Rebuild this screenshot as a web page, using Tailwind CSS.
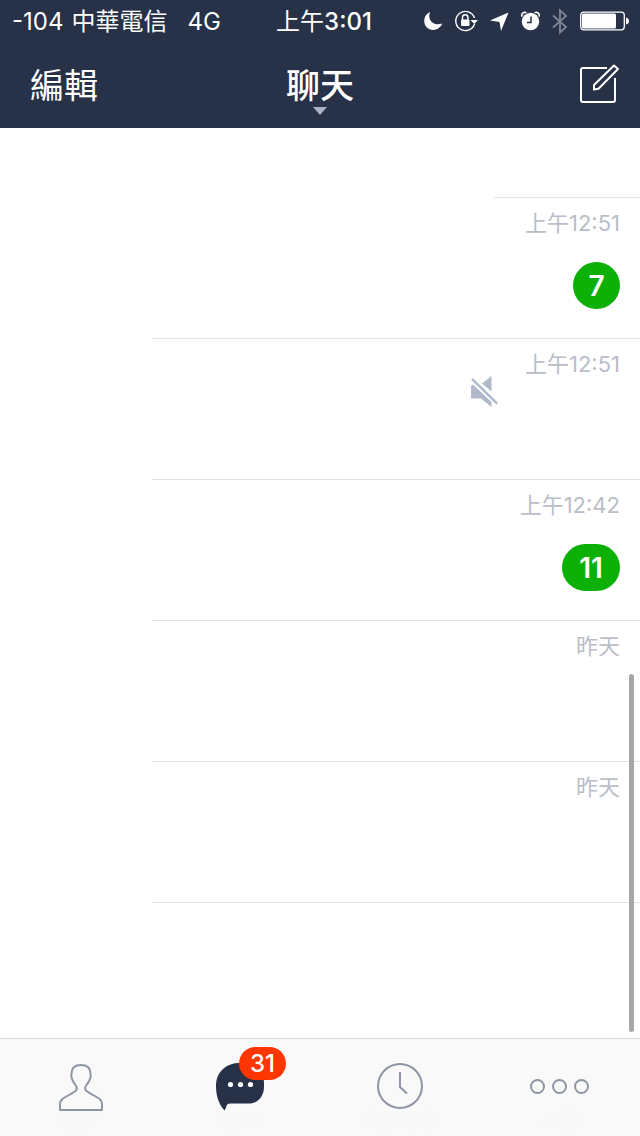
<!DOCTYPE html>
<html lang="zh-Hant">
<head>
<meta charset="utf-8">
<meta name="viewport" content="width=device-width, initial-scale=1">
<title>聊天</title>
<script src="https://cdn.jsdelivr.net/npm/@tailwindcss/browser@4"></script>
</head>
<body class="flex min-h-screen flex-col bg-white font-['Inter','Noto_Sans_CJK_TC',sans-serif] antialiased">
<header class="bg-[#273148] text-white">
  <div class="grid h-10 grid-cols-[1fr_auto_1fr] items-center text-[24px] leading-10">
    <div class="flex pt-0.5 pl-3"><span>-104</span><span class="ml-2">中華電信</span><span class="ml-5">4G</span></div>
    <div class="pt-0.5 pl-2">上午<span class="font-medium">3:01</span></div>
    <div class="flex items-center justify-end gap-3 pr-[11px]">
      <svg class="h-[22px] w-[19px]" viewBox="0 0 19 22" fill="#fff"><path d="M6 2C-1.500 5.500-1.500 16 5 19c5 2.500 11 0 13.300-5.500C10 16.500 3 10.500 6 2Z"/></svg>
      <svg class="h-[22px] w-[23px]" viewBox="0 0 23 22" fill="none" stroke="#fff"><path d="M19.500 8A9.600 9.600 0 1 0 19.500 14" stroke-width="1.400"/><path d="M15.500 10h7.500L19.300 14Z" fill="#fff" stroke="none"/><path d="M7.500 10V7.500a2.700 2.700 0 0 1 5.400 0V10" stroke-width="1.500"/><rect x="6" y="9.500" width="8.500" height="6.500" rx="1" fill="#fff" stroke="none"/></svg>
      <svg class="h-[22px] w-[19px]" viewBox="0 0 19 22" fill="#fff"><path d="M18.500 2.500 11 21 9.500 12 0 10.500Z"/></svg>
      <svg class="h-[22px] w-[19px]" viewBox="0 0 19 22" fill="#fff"><circle cx="9.500" cy="11.500" r="8.700"/><path d="M.8 6C.3 4 2.300 1.800 4.800 2.500M18.200 6c.5-2-1.500-4.200-4-3.500" fill="none" stroke="#fff" stroke-width="1.600" stroke-linecap="round"/><path d="M10 6.500v6H6" fill="none" stroke="#273148" stroke-width="1.500"/></svg>
      <svg class="h-[27px] w-4" viewBox="0 0 16 27" fill="none" stroke="#7b8291" stroke-width="1.900"><path d="M1 7.500 14 19 8 24.500V2.500L14 8 1 19.500"/></svg>
      <svg class="h-[20px] w-[49px]" viewBox="0 0 49 20"><rect x=".7" y="1.200" width="43.600" height="17.600" rx="3" fill="none" stroke="#fff" stroke-width="1.300"/><rect x="2" y="2.600" width="34" height="14.800" rx="1.500" fill="#fff"/><path d="M46 6.500c4 1 4 6 0 7Z" fill="#fff"/></svg>
    </div>
  </div>
  <div class="grid h-22 grid-cols-[1fr_auto_1fr] items-start">
    <button type="button" class="mt-[25px] ml-[30px] justify-self-start text-[34px] leading-[42px] font-normal">編輯</button>
    <button type="button" class="mt-[25px] flex flex-col items-center text-[34px] leading-[42px] font-medium">聊天
      <svg class="h-2 w-3.5" viewBox="0 0 14 8" fill="#a9b3c6"><path d="M0 0h14L7 8Z"/></svg>
    </button>
    <button type="button" aria-label="新聊天" class="mt-6 mr-5 justify-self-end">
      <svg class="h-10 w-10" viewBox="0 0 40 40" fill="none" stroke="#fff" stroke-width="2" stroke-linejoin="round"><path d="M27 4H3a2 2 0 0 0-2 2v30a2 2 0 0 0 2 2h30a2 2 0 0 0 2-2V14"/><path d="M14 25.500V21L34 1.500 38 5 18.500 24.800Z"/></svg>
    </button>
  </div>
</header>
<main class="relative flex-1">
  <ul class="text-[22px] leading-7 text-[#b9bec9]">
    <li class="ml-[494px] h-[70px] border-b border-[#e2e2e4]"></li>
    <li class="ml-[152px] flex h-[141px] justify-end border-b border-[#e2e2e4] pt-[11px] pr-5">
      <div class="flex flex-col items-end gap-[25px]"><time>上午12:51</time><span class="h-[47px] min-w-[47px] rounded-full bg-[#0db006] px-3.5 text-center text-[28px] leading-[49px] font-semibold text-white">7</span></div>
    </li>
    <li class="ml-[152px] flex h-[141px] justify-end gap-[22px] border-b border-[#e2e2e4] pt-[11px] pr-5">
      <svg class="mt-[26px] h-8 w-7" viewBox="0 0 28 32" fill="#b0bacb"><path d="M21.500 0V15.500L12 7.500ZM1 10 3 8.500 21.500 26V31L11 22.500H1ZM1.200 3.800 2.900 2.100 28 26.800 26.300 28.500Z"/></svg>
      <time class="w-25 text-right whitespace-nowrap">上午12:51</time>
    </li>
    <li class="ml-[152px] flex h-[141px] justify-end border-b border-[#e2e2e4] pt-[11px] pr-5">
      <div class="flex flex-col items-end gap-[25px]"><time>上午12:42</time><span class="h-[47px] min-w-[58px] rounded-full bg-[#0db006] px-3.5 text-center text-[28px] leading-[49px] font-semibold text-white">11</span></div>
    </li>
    <li class="ml-[152px] flex h-[141px] justify-end border-b border-[#e2e2e4] pt-[11px] pr-5"><time>昨天</time></li>
    <li class="ml-[152px] flex h-[141px] justify-end border-b border-[#e2e2e4] pt-[11px] pr-5"><time>昨天</time></li>
  </ul>
  <div class="absolute top-[546px] right-1.5 bottom-1.5 w-[5px] rounded-full bg-[#a6a6a6]"></div>
</main>
<nav class="grid h-[98px] grid-cols-4 border-t border-[#d5d5d7] bg-[#f9f9f9] text-[18px] leading-5 text-[#f7f7f7]">
  <a href="#friends" class="flex flex-col items-center pt-6">
    <svg class="h-12 w-12" viewBox="0 0 48 48" fill="none" stroke="#8e95a5" stroke-width="2" stroke-linejoin="round"><path d="M4 47V41.500c0-3 1-4.500 3-6C11 33 16 30.500 19.500 28c1.500-1.500 1.500-4 0-6-2-2-3-4-3.800-7C15 13.500 15.300 12.500 15.500 10.500 15.500 4.500 19 2 25 2s9.500 2.500 9.500 8.500c.2 2 .5 3-.2 4.500-.8 3-1.800 5-3.800 7-1.500 2-1.500 4.500 0 6 3.500 2.500 8.500 5 12.500 7.500 2 1.500 3 3 3 6V47Z"/></svg>
    <span>好友</span>
  </a>
  <a href="#chats" class="flex flex-col items-center pt-6">
    <span class="relative h-12 w-12">
      <svg class="h-12 w-12" viewBox="0 0 48 48"><path d="M24 0C36 0 48 7 48 20v4c0 9-6 16.500-15 16.500H14.500c-3 0-4 1.500-4.500 4L8.500 47.500C3.500 42 0 34 0 23 0 8 11 0 24 0Z" fill="#273148"/><g fill="#fff"><circle cx="14.500" cy="21.500" r="2.600"/><circle cx="24.500" cy="21.500" r="2.600"/><circle cx="34.500" cy="21.500" r="2.600"/></g></svg>
      <span class="absolute -top-4 left-[23px] h-[33px] w-[47px] rounded-full bg-[#ff3600] text-center text-[24px] leading-[34px] font-medium text-white">31</span>
    </span>
    <span>聊天</span>
  </a>
  <a href="#timeline" class="flex flex-col items-center pt-6">
    <svg class="h-12 w-12" viewBox="0 0 48 48" fill="none" stroke="#8e95a5" stroke-width="2"><circle cx="24" cy="23" r="22"/><path d="M24 9V24L31 30.500"/></svg>
    <span>動態消息</span>
  </a>
  <a href="#more" class="flex flex-col items-center pt-6">
    <svg class="h-12 w-[60px]" viewBox="0 0 60 48" fill="none" stroke="#8e95a5" stroke-width="2"><circle cx="7.500" cy="23.500" r="6.500"/><circle cx="29.500" cy="23.500" r="6.500"/><circle cx="51.500" cy="23.500" r="6.500"/></svg>
    <span>其他</span>
  </a>
</nav>
</body>
</html>
